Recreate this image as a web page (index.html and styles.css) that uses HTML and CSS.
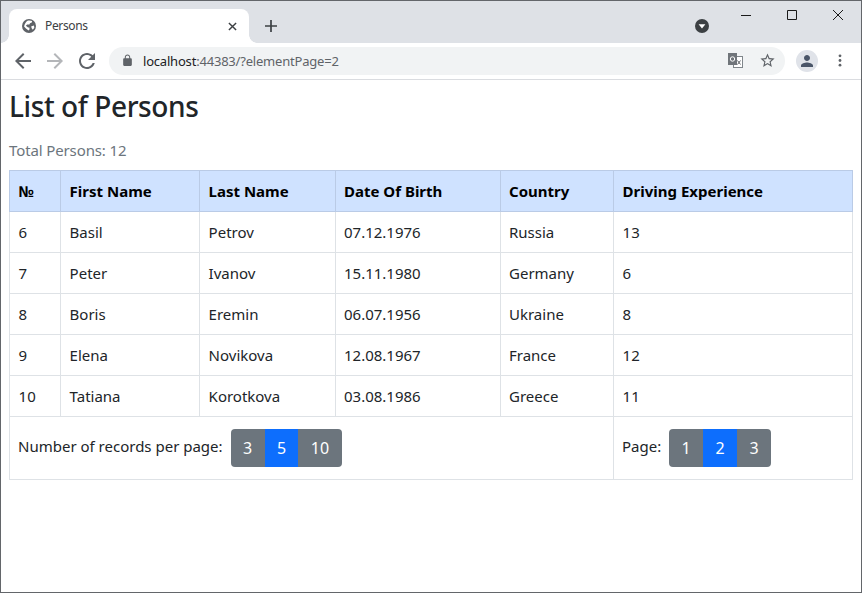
FILE: index.html
```html
<!DOCTYPE html>
<html lang="en">

<head>
    <meta charset="UTF-8">
    <meta name="viewport" content="width=device-width, initial-scale=1.0">
    <title>Persons</title>
    <link rel="stylesheet" href="styles.css">
</head>

<body>
    <div class="window">
        <div class="tabstrip">
            <div class="tab">
                <svg class="favicon" viewBox="0 0 14 14"><circle cx="7" cy="7" r="7" fill="#5f6368"/><path fill="#fff" d="M5.500 1.800c1.600-.5 3.200-.4 4.600.3l-.3 1.400-1.800.7-.6 1.300-2.300.1-1.200 1.200 2.200 1.700 1.200.1.300 1.600-1 1.200C4 9.800 2.900 8.700 2.100 7.600 2.500 5.200 3.800 3 5.500 1.800zM9.300 7.300l2.700-.8.300 2.300-1.500 1.900-1.300-1.700z"/></svg>
                <span class="tab-title">Persons</span>
                <svg class="tab-close" viewBox="0 0 10 10"><path stroke="#3c4043" stroke-width="1.6" fill="none" d="M1 1l8 8M9 1l-8 8"/></svg>
            </div>
            <svg class="newtab" viewBox="0 0 12 12"><path stroke="#3c4043" stroke-width="1.7" fill="none" d="M6 0v12M0 6h12"/></svg>
            <svg class="tabsearch" viewBox="0 0 14 14"><circle cx="7" cy="7" r="7" fill="#3c4043"/><path fill="#fff" d="M3.600 5.200h6.800L7 9.600z"/></svg>
            <div class="winbtn">
                <svg viewBox="0 0 10 10"><path stroke="#1a1a1a" fill="none" d="M0 5.500h10"/></svg>
            </div>
            <div class="winbtn">
                <svg viewBox="0 0 10 10"><path stroke="#1a1a1a" fill="none" d="M.5.5h9v9h-9z"/></svg>
            </div>
            <div class="winbtn">
                <svg viewBox="0 0 10 10"><path stroke="#1a1a1a" fill="none" d="M0 0l10 10M10 0L0 10"/></svg>
            </div>
        </div>

        <div class="toolbar">
            <svg class="navicon" viewBox="0 0 24 24"><path fill="#5f6368" d="M20 11H7.830l5.590-5.590L12 4l-8 8 8 8 1.410-1.410L7.830 13H20v-2z"/></svg>
            <svg class="navicon" viewBox="0 0 24 24"><path fill="#b4b6b9" d="M12 4l-1.410 1.410L16.170 11H4v2h12.170l-5.580 5.590L12 20l8-8z"/></svg>
            <svg class="navicon" viewBox="0 0 24 24"><path fill="#5f6368" d="M17.650 6.350C16.200 4.900 14.210 4 12 4c-4.420 0-7.990 3.580-7.990 8s3.570 8 7.990 8c3.730 0 6.840-2.550 7.730-6h-2.080c-.82 2.330-3.040 4-5.650 4-3.310 0-6-2.690-6-6s2.690-6 6-6c1.660 0 3.140.69 4.220 1.780L13 11h7V4l-2.350 2.350z"/></svg>
            <div class="omnibox">
                <svg class="lock" viewBox="0 0 24 24"><path fill="#5f6368" fill-rule="evenodd" d="M18 8h-1V6c0-2.760-2.240-5-5-5S7 3.240 7 6v2H6c-1.100 0-2 .9-2 2v10c0 1.100.9 2 2 2h12c1.100 0 2-.9 2-2V10c0-1.100-.9-2-2-2zM15.100 8H8.900V6c0-1.710 1.390-3.100 3.100-3.100s3.100 1.390 3.100 3.100v2z"/></svg>
                <span class="url"><span class="host">localhost</span>:44383/?elementPage=2</span>
                <svg class="translate" viewBox="0 0 15 15"><rect x="5.500" y="3.500" width="9" height="11" fill="#fff" stroke="#80868b"/><rect x="0" y="0" width="9" height="12" fill="#70757a"/><circle cx="4.500" cy="6" r="2.200" fill="none" stroke="#fff"/><path stroke="#5f6368" fill="none" d="M9.500 7.500l3 4M12.500 7.500l-3 4"/></svg>
                <svg class="star" viewBox="0 0 24 24"><path fill="#5f6368" d="M22 9.240l-7.190-.62L12 2 9.190 8.630 2 9.240l5.460 4.730L5.820 21 12 17.270 18.180 21l-1.630-7.030L22 9.240zM12 15.400l-3.760 2.270 1-4.280-3.320-2.880 4.380-.38L12 6.100l1.710 4.040 4.380.38-3.320 2.880 1 4.280L12 15.400z"/></svg>
            </div>
            <div class="avatar">
                <svg viewBox="0 0 24 24"><path fill="#4a5568" d="M12 12c2.210 0 4-1.790 4-4s-1.790-4-4-4-4 1.790-4 4 1.790 4 4 4zm0 2c-2.670 0-8 1.340-8 4v2h16v-2c0-2.660-5.330-4-8-4z"/></svg>
            </div>
            <svg class="kebab" viewBox="0 0 4 14"><circle cx="2" cy="2" r="1.500" fill="#5f6368"/><circle cx="2" cy="7" r="1.500" fill="#5f6368"/><circle cx="2" cy="12" r="1.500" fill="#5f6368"/></svg>
        </div>

        <div class="content">
            <h1>List of Persons</h1>
            <p class="total">Total Persons: 12</p>
            <table class="persons">
                <colgroup>
                    <col class="c-id">
                    <col class="c-first">
                    <col class="c-last">
                    <col class="c-date">
                    <col class="c-country">
                    <col>
                </colgroup>
                <thead>
                    <tr>
                        <th>№</th>
                        <th>First Name</th>
                        <th>Last Name</th>
                        <th>Date Of Birth</th>
                        <th>Country</th>
                        <th>Driving Experience</th>
                    </tr>
                </thead>
                <tbody>
                    <tr><td>6</td><td>Basil</td><td>Petrov</td><td>07.12.1976</td><td>Russia</td><td>13</td></tr>
                    <tr><td>7</td><td>Peter</td><td>Ivanov</td><td>15.11.1980</td><td>Germany</td><td>6</td></tr>
                    <tr><td>8</td><td>Boris</td><td>Eremin</td><td>06.07.1956</td><td>Ukraine</td><td>8</td></tr>
                    <tr><td>9</td><td>Elena</td><td>Novikova</td><td>12.08.1967</td><td>France</td><td>12</td></tr>
                    <tr><td>10</td><td>Tatiana</td><td>Korotkova</td><td>03.08.1986</td><td>Greece</td><td>11</td></tr>
                </tbody>
                <tfoot>
                    <tr>
                        <td colspan="5">
                            <div class="pager">
                                <span>Number of records per page:</span>
                                <div class="btn-group">
                                    <a class="btn">3</a>
                                    <a class="btn active">5</a>
                                    <a class="btn">10</a>
                                </div>
                            </div>
                        </td>
                        <td>
                            <div class="pager">
                                <span>Page:</span>
                                <div class="btn-group">
                                    <a class="btn">1</a>
                                    <a class="btn active">2</a>
                                    <a class="btn">3</a>
                                </div>
                            </div>
                        </td>
                    </tr>
                </tfoot>
            </table>
        </div>
    </div>
</body>

</html>
```

FILE: styles.css
```css
html, body{
    margin: 0;
    height: 100%;
}
body{
    background-color: #fff;
    overflow: hidden;
}
.window{
    box-sizing: border-box;
    width: 862px;
    height: 593px;
    border: 1px solid #63666a;
    background-color: #fff;
    font-family: "Noto Sans", sans-serif;
    color: #212529;
    overflow: hidden;
}
svg{
    display: block;
    flex: none;
}

/* tab strip */
.tabstrip{
    display: flex;
    align-items: flex-start;
    height: 42px;
    background-color: #dee1e6;
}
.tab{
    position: relative;
    display: flex;
    align-items: center;
    box-sizing: border-box;
    flex: none;
    width: 240px;
    height: 34px;
    margin: 8px 0 0 8px;
    padding: 0 12px 0 13px;
    background-color: #fff;
    border-radius: 8px 8px 0 0;
}
.tab::before,
.tab::after{
    content: "";
    position: absolute;
    bottom: 0;
    width: 8px;
    height: 8px;
}
.tab::before{
    left: -8px;
    background: radial-gradient(circle at 0 0, #dee1e6 7.5px, #fff 8px);
}
.tab::after{
    right: -8px;
    background: radial-gradient(circle at 100% 0, #dee1e6 7.5px, #fff 8px);
}
.favicon{
    width: 14px;
    height: 14px;
}
.tab-title{
    margin-left: 9px;
    font-size: 12px;
    line-height: 16px;
    color: #3c4043;
    letter-spacing: -0.35px;
}
.tab-close{
    width: 9px;
    height: 9px;
    margin-left: auto;
}
.newtab{
    width: 12px;
    height: 12px;
    margin: 19px 0 0 16px;
}
.tabsearch{
    width: 14px;
    height: 14px;
    margin: 18px 14px 0 418px;
}
.winbtn{
    display: flex;
    flex: none;
    align-items: center;
    justify-content: center;
    width: 46px;
    height: 28px;
}
.winbtn svg{
    width: 10px;
    height: 10px;
}

/* toolbar */
.toolbar{
    display: flex;
    align-items: center;
    box-sizing: border-box;
    height: 37px;
    padding: 0 0 1px 10px;
    background-color: #fff;
    border-bottom: 1px solid #dadce0;
}
.navicon{
    width: 24px;
    height: 24px;
    margin-right: 8px;
}
.omnibox{
    display: flex;
    align-items: center;
    box-sizing: border-box;
    width: 676px;
    height: 28px;
    margin-left: 2px;
    padding: 0 8px 0 12px;
    background-color: #f1f3f4;
    border-radius: 14px;
}
.lock{
    width: 13px;
    height: 13px;
}
.url{
    margin-left: 9px;
    font-size: 13px;
    color: #5f6368;
    letter-spacing: -0.2px;
}
.host{
    color: #202124;
}
.translate{
    width: 15px;
    height: 15px;
    margin-left: auto;
}
.star{
    width: 17px;
    height: 17px;
    margin: 0 1px 0 16px;
}
.avatar{
    display: flex;
    align-items: center;
    justify-content: center;
    width: 22px;
    height: 22px;
    margin-left: 11px;
    border-radius: 50%;
    background-color: #e0e3e9;
}
.avatar svg{
    width: 18px;
    height: 18px;
}
.kebab{
    width: 4px;
    height: 13px;
    margin-left: 20px;
}

/* page */
.content{
    padding: 7px 8px 0 8px;
}
h1{
    margin: 0;
    font-size: 28px;
    font-weight: 500;
    line-height: 38px;
    letter-spacing: -0.4px;
}
.total{
    margin: 13px 0 8px;
    font-size: 15px;
    line-height: 24px;
    letter-spacing: -0.12px;
    color: #6c757d;
}
.persons{
    width: 844px;
    table-layout: fixed;
    border-collapse: collapse;
    font-size: 15px;
    line-height: 24px;
}
.c-id{ width: 51px; }
.c-first{ width: 139px; }
.c-last{ width: 136px; }
.c-date{ width: 165px; }
.c-country{ width: 113px; }
.persons th,
.persons td{
    padding: 8px 8px 8px 8.6px;
    border: 1px solid #dee2e6;
    text-align: left;
    white-space: nowrap;
}
.persons th:nth-child(4),
.persons td:nth-child(4),
.persons th:nth-child(5),
.persons td:nth-child(5),
.persons tfoot td{
    padding-left: 8px;
}
.persons th{
    font-weight: 700;
    color: #000;
    background-color: #cfe2ff;
    border-color: #bacbe6;
}
.pager{
    display: flex;
    align-items: center;
    gap: 8px;
    margin: 4px 0;
}
.pager span{
    position: relative;
    top: -2px;
}
.btn-group{
    display: flex;
    border-radius: 4px;
    overflow: hidden;
}
.btn{
    padding: 7px 12.4px;
    font-size: 16px;
    background-color: #6c757d;
    color: #fff;
}
.btn.active{
    background-color: #0d6efd;
}
```
